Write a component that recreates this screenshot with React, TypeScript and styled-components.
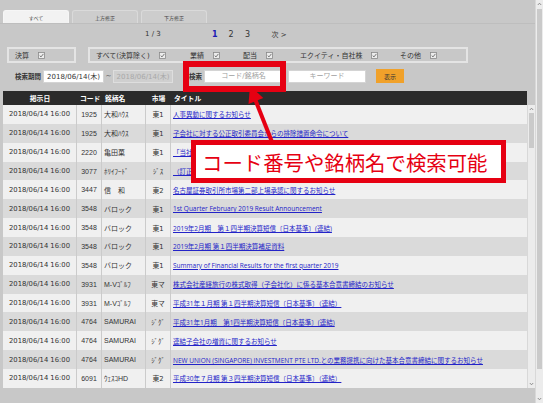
import styled, { createGlobalStyle } from "styled-components";

const GlobalStyle = createGlobalStyle`
	html, body {
		margin: 0;
		padding: 0;
		background: #c8c8c8;
	}
	body {
		font-family: "DejaVu Sans", "Noto Sans CJK JP", sans-serif;
		color: #333;
	}
`;

const RED = "#e60012";

const Screen = styled.div`
	position: relative;
	width: 543px;
	height: 403px;
	overflow: hidden;
	display: flex;
	background: #c8c8c8;
`;

const Main = styled.div`
	width: 535px;
	display: flex;
	flex-direction: column;
`;

const TabBar = styled.div`
	display: flex;
	gap: 3px;
	padding: 10px 0 0 3px;
	border-bottom: 1px solid #bebebe;
`;

const Tab = styled.div<{ $active?: boolean }>`
	width: 66px;
	height: 13px;
	box-sizing: border-box;
	border: 1px solid ${(p) => (p.$active ? "#f6f6f6" : "#dadada")};
	border-bottom: none;
	border-radius: 3px 3px 0 0;
	background: ${(p) => (p.$active ? "#f2f2f2" : "#cdcdcd")};
	font-size: 5px;
	color: #444;
	display: flex;
	align-items: center;
	justify-content: center;
`;

const Pager = styled.div`
	display: flex;
	align-items: center;
	height: 12px;
	margin-top: 4px;
	padding-left: 145px;
	font-size: 7px;
	color: #333;
`;

const PageInfo = styled.span`
	width: 67px;
`;

const PageNum = styled.span<{ $current?: boolean }>`
	width: 16.5px;
	font-size: 8px;
	font-weight: ${(p) => (p.$current ? 700 : 400)};
	color: ${(p) => (p.$current ? "#1a1ab4" : "#333")};
`;

const NextLink = styled.span`
	margin-left: 10px;
`;

const FilterRow = styled.div`
	display: flex;
	margin-top: 7px;
	height: 16px;
`;

const FilterBox = styled.div<{ $width: number; $offset: number }>`
	box-sizing: border-box;
	width: ${(p) => p.$width}px;
	margin-left: ${(p) => p.$offset}px;
	border: 2px solid #e4e4e4;
	display: flex;
	align-items: center;
	padding-left: 6px;
	font-size: 7px;
	color: #333;
`;

const FilterItem = styled.label<{ $width?: number }>`
	display: flex;
	align-items: center;
	gap: 9px;
	width: ${(p) => (p.$width ? `${p.$width}px` : "auto")};
	flex-shrink: 0;
`;

const CheckIcon = () => (
	<svg width="7" height="7" viewBox="0 0 7 7">
		<rect x="0.5" y="0.5" width="6" height="6" fill="#ececec" stroke="#8a8a8a" strokeWidth="0.8" />
		<path d="M1.7 3.6 L3 4.9 L5.4 1.9" fill="none" stroke="#6a6a6a" strokeWidth="0.9" />
	</svg>
);

const SearchRow = styled.div`
	display: flex;
	align-items: center;
	margin-top: 6px;
	height: 14px;
	padding-left: 15px;
	font-size: 7px;
`;

const SearchLabel = styled.span<{ $offset?: number }>`
	font-weight: 700;
	font-size: 6.5px;
	margin-left: ${(p) => p.$offset ?? 0}px;
	margin-right: 2px;
`;

const Field = styled.input<{ $width: number; $disabled?: boolean; $gap?: number }>`
	box-sizing: border-box;
	width: ${(p) => p.$width}px;
	height: 13px;
	margin: 0 0 0 ${(p) => p.$gap ?? 0}px;
	padding: 0;
	border: 1px solid ${(p) => (p.$disabled ? "#dedede" : "#d4d4d4")};
	background: ${(p) => (p.$disabled ? "#cfcfcf" : "#fff")};
	color: ${(p) => (p.$disabled ? "#a8a8a8" : "#333")};
	font-family: "DejaVu Sans", "Noto Sans CJK JP", sans-serif;
	font-size: 7px;
	text-align: center;
	outline: none;

	&::placeholder {
		color: #a0a0a0;
	}
`;

const Tilde = styled.span`
	width: 9px;
	text-align: center;
	color: #444;
`;

const ShowButton = styled.button`
	width: 28px;
	height: 14px;
	margin-left: 10px;
	padding: 0;
	border: none;
	background: #f0a12a;
	color: #333;
	font-family: "Noto Sans CJK JP", sans-serif;
	font-size: 6px;
`;

const Table = styled.div`
	margin: 8px 0 0 3px;
	width: 532px;
	font-size: 6.8px;
`;

const GRID = "74px 25px 44px 25px 1fr";

const HeaderRow = styled.div`
	display: grid;
	grid-template-columns: ${GRID};
	width: 524px;
	height: 14px;
	background: #2b2b2b;
	color: #fff;
	font-weight: 700;
	align-items: center;
`;

const HeadCell = styled.div<{ $align?: string }>`
	text-align: ${(p) => p.$align ?? "left"};
	padding: 0 3px;
	white-space: nowrap;
`;

const BodyWrap = styled.div`
	display: flex;
`;

const Rows = styled.div`
	width: 524px;
`;

const Row = styled.div<{ $odd: boolean }>`
	display: grid;
	grid-template-columns: ${GRID};
	height: 18.87px;
	background: ${(p) => (p.$odd ? "#dadada" : "#f0f0f0")};
	align-items: stretch;
`;

const Cell = styled.div<{ $align?: string; $narrow?: boolean }>`
	display: flex;
	align-items: center;
	justify-content: ${(p) => p.$align ?? "flex-start"};
	padding: 0 2px;
	border-right: 1px solid #cbcbcb;
	white-space: nowrap;
	overflow: hidden;
	color: #333;
	font-family: ${(p) =>
		p.$narrow
			? `"Liberation Sans", "Noto Sans CJK JP", sans-serif`
			: `"DejaVu Sans", "Noto Sans CJK JP", sans-serif`};
	font-size: ${(p) => (p.$narrow ? "7px" : "6.8px")};

	&:last-child {
		border-right: none;
	}
`;

const TitleLink = styled.a`
	color: #2323c8;
	text-decoration: underline;
	font-family: "Open Sans", "Noto Sans CJK JP", sans-serif;
	font-size: 6.5px;
`;

const ScrollBar = styled.div<{ $width: number }>`
	width: ${(p) => p.$width}px;
	display: flex;
	flex-direction: column;
	background: #ececec;
	border-left: 1px solid #d8d8d8;
	box-sizing: border-box;
`;

const ScrollArrow = styled.div`
	height: 8px;
	display: flex;
	align-items: center;
	justify-content: center;
`;

const ScrollTrack = styled.div`
	flex: 1;
	display: flex;
	flex-direction: column;
`;

const ScrollThumb = styled.div<{ $top: number; $height: number }>`
	margin: ${(p) => p.$top}px 1px 0 1px;
	height: ${(p) => p.$height}px;
	background: #cacaca;
`;

const Chevron = ({ up }: { up?: boolean }) => (
	<svg width="5" height="4" viewBox="0 0 5 4">
		<path
			d={up ? "M0.8 3 L2.5 1.2 L4.2 3" : "M0.8 1 L2.5 2.8 L4.2 1"}
			fill="none"
			stroke="#777"
			strokeWidth="0.8"
		/>
	</svg>
);

const SearchHighlight = styled.div`
	position: absolute;
	left: 183px;
	top: 61px;
	width: 103px;
	height: 31px;
	box-sizing: border-box;
	border: 6px solid ${RED};
`;

const Arrow = styled.svg`
	position: absolute;
	left: 0;
	top: 0;
	pointer-events: none;
`;

const Callout = styled.div`
	position: absolute;
	left: 191px;
	top: 140px;
	width: 315px;
	height: 43px;
	box-sizing: border-box;
	border: 5px solid ${RED};
	background: #fff;
	display: flex;
	align-items: center;
	padding-left: 6px;
	font-family: "Noto Sans CJK JP", sans-serif;
	font-size: 20.4px;
	color: ${RED};
	white-space: nowrap;
`;

interface Disclosure {
	code: string;
	name: string;
	market: string;
	title: string;
}

const DATE = "2018/06/14 16:00";

const disclosures: Disclosure[] = [
	{ code: "1925", name: "大和ﾊｳｽ", market: "東1", title: "人事異動に関するお知らせ" },
	{ code: "1925", name: "大和ﾊｳｽ", market: "東1", title: "子会社に対する公正取引委員会からの排除措置命令について" },
	{ code: "2220", name: "亀田菓", market: "東1", title: "「当社株式の東京証券取引所市場第一部指定」に関するお知らせ" },
	{ code: "3077", name: "ﾎﾘｲﾌｰﾄﾞ", market: "ｼﾞｽ", title: "（訂正）「平成30年3月期 決算短信〔日本基準〕（連結）」の一部訂正について" },
	{ code: "3447", name: "信　和", market: "東2", title: "名古屋証券取引所市場第二部上場承認に関するお知らせ" },
	{ code: "3548", name: "バロック", market: "東1", title: "1st Quarter February 2019 Result Announcement" },
	{ code: "3548", name: "バロック", market: "東1", title: "2019年2月期　第１四半期決算短信〔日本基準〕(連結)" },
	{ code: "3548", name: "バロック", market: "東1", title: "2019年2月期 第１四半期決算補足資料" },
	{ code: "3548", name: "バロック", market: "東1", title: "Summary of Financial Results for the first quarter 2019" },
	{ code: "3931", name: "M-Vｺﾞﾙﾌ", market: "東マ", title: "株式会社産経旅行の株式取得（子会社化）に係る基本合意書締結のお知らせ" },
	{ code: "3931", name: "M-Vｺﾞﾙﾌ", market: "東マ", title: "平成31年１月期 第１四半期決算短信〔日本基準〕（連結）" },
	{ code: "4764", name: "SAMURAI", market: "ｼﾞｸﾞ", title: "平成31年1月期　第1四半期決算短信〔日本基準〕(連結)" },
	{ code: "4764", name: "SAMURAI", market: "ｼﾞｸﾞ", title: "連結子会社の増資に関するお知らせ" },
	{ code: "4764", name: "SAMURAI", market: "ｼﾞｸﾞ", title: "NEW UNION (SINGAPORE) INVESTMENT PTE LTD.との業務提携に向けた基本合意書締結に関するお知らせ" },
	{ code: "6091", name: "ｳｪｽｺHD", market: "東2", title: "平成30年７月期 第３四半期決算短信〔日本基準〕（連結）" },
];

const filters = [
	{ label: "すべて(決算除く)", width: 94 },
	{ label: "業績", width: 53 },
	{ label: "配当", width: 57 },
	{ label: "エクイティ・自社株", width: 100 },
	{ label: "その他" },
];

export default function App() {
	return (
		<Screen>
			<GlobalStyle />
			<Main>
				<TabBar>
					<Tab $active>すべて</Tab>
					<Tab>上方修正</Tab>
					<Tab>下方修正</Tab>
				</TabBar>

				<Pager>
					<PageInfo>1 / 3</PageInfo>
					<PageNum $current>1</PageNum>
					<PageNum>2</PageNum>
					<PageNum>3</PageNum>
					<NextLink>次 &gt;</NextLink>
				</Pager>

				<FilterRow>
					<FilterBox $width={69} $offset={7}>
						<FilterItem>
							決算
							<CheckIcon />
						</FilterItem>
					</FilterBox>
					<FilterBox $width={380} $offset={12}>
						{filters.map((f) => (
							<FilterItem key={f.label} $width={f.width}>
								{f.label}
								<CheckIcon />
							</FilterItem>
						))}
					</FilterBox>
				</FilterRow>

				<SearchRow>
					<SearchLabel>検索期間</SearchLabel>
					<Field $width={61} readOnly value="2018/06/14(木)" />
					<Tilde>~</Tilde>
					<Field $width={60} $disabled readOnly value="2018/06/14(木)" />
					<SearchLabel $offset={16}>検索</SearchLabel>
					<Field $width={79} readOnly placeholder="コード/銘柄名" />
					<Field $width={78} $gap={5} readOnly placeholder="キーワード" />
					<ShowButton>表示</ShowButton>
				</SearchRow>

				<Table>
					<HeaderRow>
						<HeadCell $align="center">掲示日</HeadCell>
						<HeadCell>コード</HeadCell>
						<HeadCell>銘柄名</HeadCell>
						<HeadCell $align="center">市場</HeadCell>
						<HeadCell>タイトル</HeadCell>
					</HeaderRow>
					<BodyWrap>
						<Rows>
							{disclosures.map((d, i) => (
								<Row key={i} $odd={i % 2 === 1}>
									<Cell $align="center">{DATE}</Cell>
									<Cell $align="center" $narrow>
										{d.code}
									</Cell>
									<Cell $narrow>{d.name}</Cell>
									<Cell $align="center">{d.market}</Cell>
									<Cell>
										<TitleLink href="#">{d.title}</TitleLink>
									</Cell>
								</Row>
							))}
						</Rows>
						<ScrollBar $width={8}>
							<ScrollArrow>
								<Chevron up />
							</ScrollArrow>
							<ScrollTrack>
								<ScrollThumb $top={0} $height={35} />
							</ScrollTrack>
							<ScrollArrow>
								<Chevron />
							</ScrollArrow>
						</ScrollBar>
					</BodyWrap>
				</Table>
			</Main>

			<ScrollBar $width={8}>
				<ScrollArrow>
					<Chevron up />
				</ScrollArrow>
				<ScrollTrack>
					<ScrollThumb $top={1} $height={360} />
				</ScrollTrack>
				<ScrollArrow>
					<Chevron />
				</ScrollArrow>
			</ScrollBar>

			<SearchHighlight />
			<Arrow width="543" height="403" viewBox="0 0 543 403">
				<line x1="255" y1="99" x2="272" y2="142" stroke={RED} strokeWidth="4" />
				<polygon points="250,86 248.5,104 263.3,98" fill={RED} />
			</Arrow>
			<Callout>コード番号や銘柄名で検索可能</Callout>
		</Screen>
	);
}
